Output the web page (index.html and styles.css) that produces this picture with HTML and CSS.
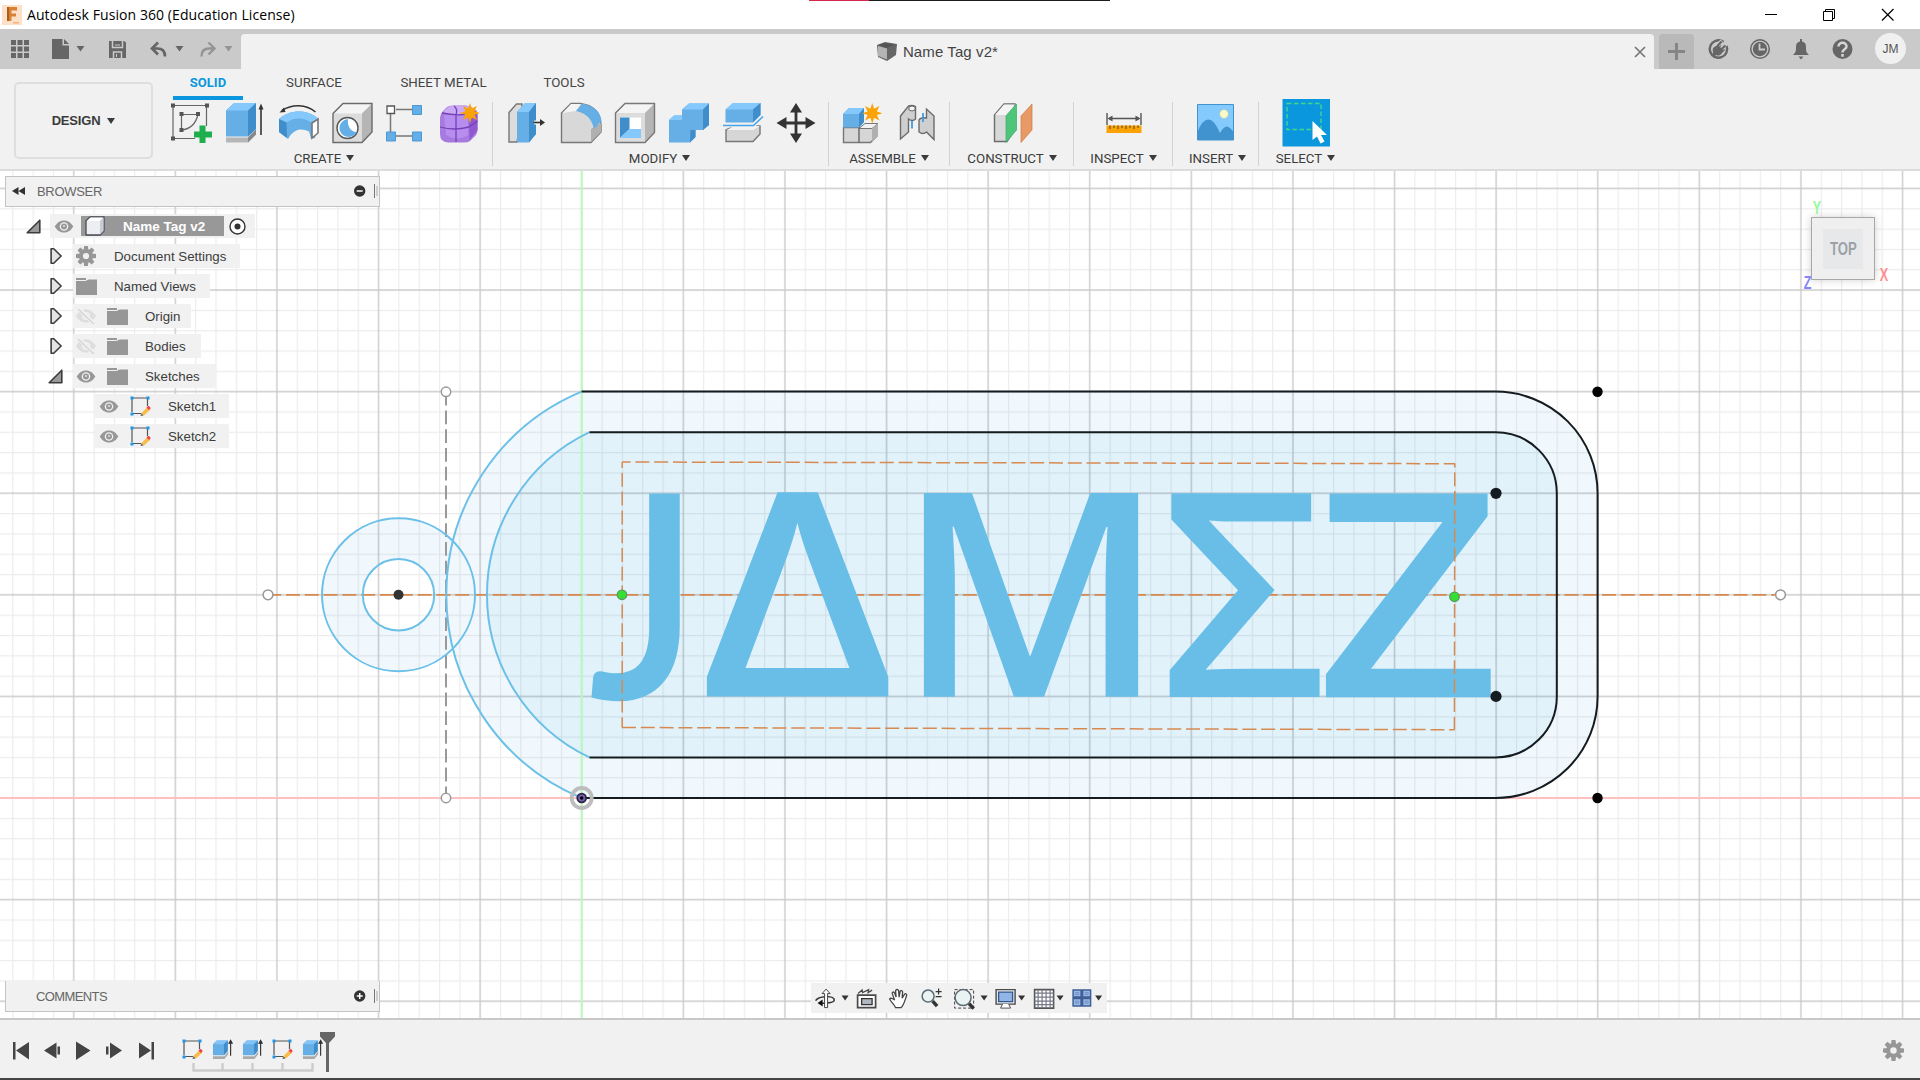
FILE: index.html
```html
<!DOCTYPE html>
<html lang="en">
<head>
<meta charset="utf-8">
<title>Autodesk Fusion 360 (Education License)</title>
<link rel="stylesheet" href="styles.css">
</head>
<body>
<svg class="defs" width="0" height="0" aria-hidden="true">
  <symbol id="eye" viewBox="0 0 20 14"><path d="M0 7C3 2 6.500 .5 10 .5S17 2 20 7C17 12 13.500 13.500 10 13.500S3 12 0 7Z" fill="#979797"/><circle cx="10" cy="7" r="4.600" fill="#f1f1f1"/><circle cx="10" cy="7" r="3.200" fill="#979797"/><circle cx="10" cy="6.500" r="1.100" fill="#e4e4e4"/></symbol>
  <symbol id="eyeoff" viewBox="0 0 20 16"><path d="M0 8C3 3 6.500 1.500 10 1.500S17 3 20 8C17 13 13.500 14.500 10 14.500S3 13 0 8Z" fill="#dedede"/><circle cx="10" cy="8" r="4" fill="#f1f1f1"/><circle cx="10" cy="8" r="2.400" fill="#dedede"/><path d="M2 0L18.500 16" stroke="#f1f1f1" stroke-width="4"/><path d="M2 1L18 16" stroke="#d6d6d6" stroke-width="1.500"/></symbol>
  <symbol id="folder" viewBox="0 0 21 17"><path d="M0 0h10v2H0ZM0 3h9.500l3-1.500H21V17H0Z" fill="#979797"/></symbol>
  <symbol id="gear" viewBox="-10 -10 20 20"><g fill="#979797"><path d="M-1.900 -10h3.800l.6 5h-5Z"/><path d="M-1.900 -10h3.800l.6 5h-5Z" transform="rotate(45)"/><path d="M-1.900 -10h3.800l.6 5h-5Z" transform="rotate(90)"/><path d="M-1.900 -10h3.800l.6 5h-5Z" transform="rotate(135)"/><path d="M-1.900 -10h3.800l.6 5h-5Z" transform="rotate(180)"/><path d="M-1.900 -10h3.800l.6 5h-5Z" transform="rotate(225)"/><path d="M-1.900 -10h3.800l.6 5h-5Z" transform="rotate(270)"/><path d="M-1.900 -10h3.800l.6 5h-5Z" transform="rotate(315)"/></g><circle r="5" fill="none" stroke="#979797" stroke-width="3.800"/></symbol>
  <symbol id="closed" viewBox="0 0 14 18"><path d="M1.200 1.200H4L12 9L4 16.800H1.200Z" fill="#e4e4e4" stroke="#3c3c3c" stroke-width="1.700" stroke-linejoin="round"/></symbol>
  <symbol id="open" viewBox="0 0 15 15"><path d="M13.800 1.200V13.800H1.200Z" fill="#999" stroke="#3c3c3c" stroke-width="1.600" stroke-linejoin="round"/></symbol>
  <symbol id="sketch" viewBox="0 0 21 21"><path d="M3 2H17M2 3V16M3 17.500H11M17.500 3V10" stroke="#555" stroke-width="1.200" fill="none"/><g fill="#1f96e6"><path d="M.5.5h3v3h-3ZM16.500.5h3v3h-3ZM.5 16.500h3v3h-3Z"/></g><path d="M11 19.500l1-3 5-5 3 2.500-5.500 5Z" fill="#fbbb48"/><path d="M10.500 20l.8-2.700 2.300 2.200Z" fill="#666"/><path d="M16.500 11.500l1.500-1.500q2.500 0 2.500 2.500l-1.500 1.500Z" fill="#f0404e"/></symbol>
  <symbol id="extr" viewBox="0 0 22 21"><path d="M1 17.500h12l4-5v3l-4 5H1Z" fill="#aaa"/><path d="M1 5L5 1h11.500V12L12.500 16.500H1Z" fill="#66aee6"/><path d="M1 5L5 1h11.500L12.500 5Z" fill="#82c4f6"/><path d="M12.500 5L16.500 1V12L12.500 16.500Z" fill="#3f8ecb"/><path d="M19.500 17V3M17.800 4l1.700-3 1.700 3Z" stroke="#333" stroke-width="1.200" fill="#333"/></symbol>
  <symbol id="dn" viewBox="0 0 8 6"><path d="M0 0h8L4 6Z" fill="currentColor"/></symbol>
  <symbol id="burst" viewBox="-10 -10 20 20"><path d="M0-10L1.800-4.500 7-7 4.500-1.800 10 0 4.500 1.800 7 7 1.800 4.500 0 10-1.800 4.500-7 7-4.500 1.800-10 0-4.500-1.800-7-7-1.800-4.500Z" fill="#fba205"/></symbol>
</svg>
<div class="app">
  <header class="titlebar">
    <svg class="logo" viewBox="0 0 20 20"><path d="M0 0H20V20H0Z" fill="#fce0c8"/><path d="M5 2H15V5.500H9.500V8.500H14V11.500H9.500V16H5Z" fill="#d98235"/><path d="M5 2h2v14H5Z" fill="#a85e20"/><path d="M11 17h6v1.500h-6Z" fill="#f5b27c"/></svg>
    <span class="apptitle">Autodesk Fusion 360 (Education License)</span>
    <span class="topline"></span>
    <svg class="winbtns" width="140" height="14" viewBox="0 0 140 14" fill="none" stroke="#000"><path d="M1 6.500h12"/><path d="M59.500 3.500h9v9h-9ZM61.500 3.500v-2h9v9h-2"/><path d="M118 1l11.500 11.500M129.500 1L118 12.500" stroke-width="1.200"/></svg>
  </header>

  <div class="tabbar">
    <svg class="quick" width="241" height="40" viewBox="0 29 241 40">
      <g fill="#666"><path d="M11 40h5v5h-5zM17.500 40h5v5h-5zM24 40h5v5h-5zM11 46.500h5v5h-5zM17.500 46.500h5v5h-5zM24 46.500h5v5h-5zM11 53h5v5h-5zM17.500 53h5v5h-5zM24 53h5v5h-5z"/>
      <path d="M52 39H62.500V45.500H69V59H52Z"/><path d="M64 39l5 5H64Z"/><path d="M76.500 46h8l-4 5.500Z"/>
      <path d="M109 41h15l2 1.500V58H109Z"/><path d="M175.500 46h8l-4 5.500Z"/></g>
      <path d="M112.500 41v6.500h10V41M113.500 58v-6h8v6" fill="none" stroke="#cacaca" stroke-width="1.500"/><path d="M115 45h5M116.500 54v3" stroke="#cacaca"/>
      <path d="M158 42.500l-6 6 6 6M152.500 48.500h5c5 0 7.500 2.500 7.500 8" fill="none" stroke="#666" stroke-width="2.700"/>
      <path d="M208.500 42.500l6 6-6 6M214 48.500h-5c-5 0-7.500 2.500-7.500 8" fill="none" stroke="#949494" stroke-width="2.400"/><path d="M224.500 46h8l-4 5.500Z" fill="#949494"/>
    </svg>
    <div class="doctab">
      <svg width="21" height="19" viewBox="0 0 21 19"><path d="M0 3L8 0l12 2-1 11-9 6-9-4Z" fill="#666"/><path d="M1 4l9 2.500V17.500L1 14Z" fill="#b4b4b4"/><path d="M1 3L8 1l10 1.500L10 6Z" fill="#555"/></svg>
      <span>Name Tag v2*</span>
      <svg class="x" width="12" height="12" viewBox="0 0 12 12"><path d="M1 1l10 10M11 1L1 11" stroke="#777" stroke-width="1.700"/></svg>
    </div>
    <div class="plus"><svg width="17" height="17" viewBox="0 0 17 17"><path d="M8.500 0V17M0 8.500H17" stroke="#858585" stroke-width="3"/></svg></div>
    <svg class="status" width="160" height="40" viewBox="1700 29 160 40">
      <circle cx="1718.500" cy="49" r="8.700" fill="none" stroke="#666" stroke-width="2.400" stroke-dasharray="22 5 28 0" transform="rotate(-200 1718.500 49)"/>
      <path d="M1713 57v-5c-1-3 0-5 3-6l4-2 5 6-3 3c-2 3-4 3-6 2l-3 3Z" fill="#666"/><path d="M1718 45l4-4M1721.500 48.500l4-4" stroke="#cacaca" stroke-width="4"/><path d="M1717.500 46l4-4.500M1721 49.500l4.500-4" stroke="#666" stroke-width="2.200"/>
      <circle cx="1760" cy="49" r="9.300" fill="none" stroke="#666" stroke-width="1.500"/><circle cx="1760" cy="49" r="7.200" fill="#666"/><path d="M1759.500 43.500V49.500h5.500" fill="none" stroke="#cacaca" stroke-width="1.800"/>
      <path d="M1793 55c3-3 3-4 3-8 0-3 1-5 4-5.500V39h2v2.500c3 .5 4 2.500 4 5.500 0 4 0 5 3 8Z" fill="#666"/><path d="M1798.500 56.500h5l-2.500 3Z" fill="#666"/>
      <circle cx="1842.500" cy="49" r="10" fill="#666"/><path d="M1838.500 46.500c0-5 8-5 8 0 0 3-4 2.500-4 6M1842.500 54v2.800" fill="none" stroke="#d6d6d6" stroke-width="2.500"/>
    </svg>
    <div class="avatar">JM</div>
  </div>

  <div class="ribbon">
    <button class="design">DESIGN <svg width="8" height="6"><use href="#dn"/></svg></button>
    <div class="tools">
      <nav class="tabs"><span class="tab on">SOLID</span><span class="tab t2">SURFACE</span><span class="tab t3">SHEET METAL</span><span class="tab t4">TOOLS</span></nav>
      <div class="groups">
        <section class="group g1"><div class="icons">
          <svg viewBox="0 0 54 46"><g fill="none" stroke="#666" stroke-width="1.200"><path d="M9 4.500V37.500H31M9 4.500H42.500V25"/><path d="M17.500 13.500H34M17.500 13.500V29C27 28 32 22 34 13.500"/></g><path d="M7 2.500h4v4H7zM41 2.500h4v4h-4zM7 35.500h4v4H7zM15.500 11h4v4h-4zM32 11h4v4h-4zM15.500 27h4v4h-4z" fill="#555"/><path d="M35.500 24.500h6v6H48v6h-6.500V42h-6v-5.500H30v-6h5.500Z" fill="#1fae4d"/></svg>
          <svg viewBox="0 0 54 46"><path d="M8 36.500h22l8-8v5l-8 8H8Z" fill="#b6b6b6"/><path d="M30 36.500l8-8v5l-8 8Z" fill="#888"/><path d="M8 9.500L16 2H38V28L30 35.500H8Z" fill="#66aee6"/><path d="M8 9.500L16 2H38L30 9.500Z" fill="#85c8fb"/><path d="M30 9.500L38 2V28L30 35.500Z" fill="#3f8ecb"/><path d="M43 34V7" stroke="#333" stroke-width="1.600"/><path d="M40.500 8.500L43 2.500l2.500 6Z" fill="#333"/></svg>
          <svg viewBox="0 0 54 46"><path d="M7 18C17 8 37 8 46.500 18L43 37l-4 .5-2-7C30 27 22 27 16 38L7 31Z" fill="#66aee6"/><path d="M7 18C17 8 37 8 46.500 18L39 21.500C32 16 22 16 14.500 21.500Z" fill="#85c8fb"/><path d="M7 18l7.500 3.500L15 37l-8-6Z" fill="#3f8ecb"/><path d="M40 22l6-4v14l-6 5Z" fill="#fff" stroke="#777" stroke-width="1.600"/><path d="M10 9.500C20 3 34 3 43.500 11" fill="none" stroke="#333" stroke-width="1.500"/><path d="M7.500 11.500l4.500-5 1.500 4.500Z" fill="#333"/></svg>
          <svg viewBox="0 0 54 46"><path d="M7 12.500L17 2.500H46V31L36 41.500H7Z" fill="#dcdcdc"/><path d="M8 12.500l9-9.500H46L36 12.500Z" fill="#f4f4f4"/><path d="M36 12.500L46 2.500V31L36 41.500Z" fill="#b5b5b5"/><path d="M7 12.500L17 2.500H46V31L36 41.500H7Z" fill="none" stroke="#6b6b6b" stroke-width="1.400"/><circle cx="21.500" cy="27" r="10.500" fill="#fff" stroke="#555" stroke-width="1.400"/><path d="M22 18a9 9 0 1 0 8.500 13C25 31 21 25 22 18Z" fill="#66aee6"/></svg>
          <svg viewBox="0 0 54 46"><path d="M16 8.500H32M10.500 13V31M16 35H32" stroke="#777" stroke-width="1.500"/><path d="M7 5h7.500v7.500H7Z" fill="#fff" stroke="#555" stroke-width="1.300"/><path d="M32.500 4.500h9v9h-9zM6.500 31h9v9h-9zM32.500 31h9v9h-9z" fill="#66aee6" stroke="#4a97d6"/></svg>
          <svg viewBox="0 0 54 46"><path d="M6 17Q6 13 9 10L13 6Q15 4.500 19 4.500H32Q43 6 43.500 15V29Q43.500 33 40 36L36 40Q34 41.500 30 41.500H14Q6 41 6 33Z" fill="#a77ae0"/><path d="M9 11Q14 4.500 20 4.500H31Q38 5 40 9L33 13H13Z" fill="#cbaaf5"/><path d="M35 15l7-6q2 3 1.500 8V29l-8 10Z" fill="#9059cf"/><path d="M10 14q10-2 24 0v20q-10 7-22 0Z" fill="#b78df0"/><path d="M6 26q14 4 29 0l8.500-6M20 5q4 3 2 9v27M8 12q15 3 25 1" fill="none" stroke="#7441b6" stroke-width="1.300"/><use href="#burst" x="26" y="2" width="20" height="20"/></svg>
        </div><div class="label">CREATE <svg width="8" height="6"><use href="#dn"/></svg></div></section>
        <section class="group g2"><div class="icons">
          <svg viewBox="0 0 54 46"><path d="M9 11.500L16.500 3H22V10l-5 31H9Z" fill="#dcdcdc" stroke="#777" stroke-width="1.400"/><path d="M17 11L25 2H36V33L29 41.500H17Z" fill="#66aee6"/><path d="M17 11L25 2H36L29 11Z" fill="#85c8fb"/><path d="M29 11L36 2V33L29 41.500Z" fill="#3f8ecb"/><path d="M34 21.500H41" stroke="#f1f1f1" stroke-width="4"/><path d="M33.500 21.500H42" stroke="#333" stroke-width="1.600"/><path d="M40 18l5 3.500-5 3.500Z" fill="#333"/></svg>
          <svg viewBox="0 0 54 46"><path d="M7.500 12L17 2.500H26Q46 5 47 24V31L37 41.500H7.500Z" fill="#d8d8d8" stroke="#777" stroke-width="1.400"/><path d="M8.500 12L17 3H27L22 10Z" fill="#f4f4f4"/><path d="M37 28l10-6v9l-10 10Z" fill="#b0b0b0"/><path d="M22 10l6-7.500Q46 6 47.500 20L40 28Q37 13 22 10Z" fill="#66aee6"/></svg>
          <svg viewBox="0 0 54 46"><path d="M7.500 12L17 2.500H46.500V31.500L37 41.500H7.500Z" fill="#dcdcdc"/><path d="M8.500 12l8.500-9H46L37 12Z" fill="#f4f4f4"/><path d="M37 12l9.500-9.500v29L37 41.500Z" fill="#b5b5b5"/><path d="M7.500 12L17 2.500H46.500V31.500L37 41.500H7.500Z" fill="none" stroke="#777" stroke-width="1.400"/><path d="M12 16.500H33V37H12Z" fill="#fff"/><path d="M12 16.500H21.500V28L12 37Z" fill="#3f8ecb"/><path d="M21.500 28H33v9H12Z" fill="#85c8fb"/></svg>
          <svg viewBox="0 0 54 46"><path d="M7 19L12 14.500H20V8.500L27 2.500H47V24L41 29H33.500V36L28 41.500H7Z" fill="#66aee6"/><path d="M7 19l5-4.500h8V19ZM20 8.500l7-6H47L41 8.500Z" fill="#85c8fb"/><path d="M41 8.500l6-6V24L41 29ZM28.500 29h5v7L28 41.500Z" fill="#3f8ecb"/></svg>
          <svg viewBox="0 0 54 46"><path d="M10 29l8-4H44V33L37 40.500H10Z" fill="#d6d6d6" stroke="#777" stroke-width="1.400"/><path d="M10.500 29l8-4H44l-7 4Z" fill="#f2f2f2"/><path d="M9.500 8.500L17 2H44.500V14L37 21.500H9.500Z" fill="#66aee6"/><path d="M9.500 8.500L17 2H44.500L37 8.500Z" fill="#85c8fb"/><path d="M37 8.500L44.500 2V14L37 21.500Z" fill="#3f8ecb"/><path d="M7 24.500H37.500L47 15.500" fill="none" stroke="#f1f1f1" stroke-width="4"/><path d="M7 24.500H37.500L47 15.500" fill="none" stroke="#45a5ea" stroke-width="1.600"/></svg>
          <svg viewBox="0 0 54 46"><path d="M26 8V37M11 22H41" stroke="#333" stroke-width="2.800"/><path d="M26 2l6 9.500H20ZM26 42l6-9.500H20ZM6.500 22l10-6v12ZM45.500 22l-10-6v12Z" fill="#333"/></svg>
        </div><div class="label">MODIFY <svg width="8" height="6"><use href="#dn"/></svg></div></section>
        <section class="group g3"><div class="icons">
          <svg viewBox="0 0 54 46"><path d="M8.500 26.500H42V35L35.500 41.500H8.500Z" fill="#d6d6d6" stroke="#777" stroke-width="1.400"/><path d="M25 26.500l5-4H43l-6 5H24Z" fill="#f2f2f2" stroke="#777"/><path d="M37 27l6-4.500V35L37 41.500Z" fill="#b0b0b0"/><path d="M24 26v15.500" stroke="#666" stroke-width="1.400"/><path d="M8 13L14 7H29V21L24 26.500H8Z" fill="#66aee6"/><path d="M8 13l6-6H29l-5 6Z" fill="#85c8fb"/><path d="M24 13l5-6V21L24 26.500Z" fill="#3f8ecb"/><use href="#burst" x="27" y="2" width="20.500" height="20.500"/></svg>
          <svg viewBox="0 0 54 46"><path d="M11.500 15l8-10q4-1.500 7 .5V18q-3 3-7 0v13l-8 7Z" fill="#cfcfcf" stroke="#6b6b6b" stroke-width="1.400"/><path d="M20 6q3-2 6 0v3q-3 2-6 0Z" fill="#f4f4f4" stroke="#6b6b6b"/><path d="M45 15l-7.500-7V17q-6-1-7.500 2V31q4 3 7.500 0l7.500 7.500Z" fill="#cfcfcf" stroke="#6b6b6b" stroke-width="1.400"/><path d="M23 20v7.500M34 12v9" stroke="#3c9ce4" stroke-width="1.800"/></svg>
        </div><div class="label">ASSEMBLE <svg width="8" height="6"><use href="#dn"/></svg></div></section>
        <section class="group g4"><div class="icons">
          <svg viewBox="0 0 54 46"><path d="M9.500 14L19 3H30V28L22 40.500H9.500Z" fill="#d8d8d8" stroke="#6b6b6b" stroke-width="1.400"/><path d="M10 14l9-10.500H30L21 14Z" fill="#f4f4f4"/><path d="M21 15L31.500 3V29L21 41.500Z" fill="#4fc57a" stroke="#3aae65" stroke-width=".7"/><path d="M36 15L47 3V29L36 41.500Z" fill="#e79a66" stroke="#cf7a42" stroke-width=".7"/></svg>
        </div><div class="label">CONSTRUCT <svg width="8" height="6"><use href="#dn"/></svg></div></section>
        <section class="group g5"><div class="icons">
          <svg viewBox="0 0 54 46"><path d="M10 12v12M44 12v12M12 17.500H42" stroke="#555" stroke-width="1.400"/><path d="M10.500 17.500l5-3v6ZM43.500 17.500l-5-3v6Z" fill="#555"/><path d="M9.500 24.500h35V32h-35Z" fill="#fba205"/><path d="M13 24.500v3.500M17 24.500v2.500M21 24.500v3.500M25 24.500v2.500M29 24.500v3.500M33 24.500v2.500M37 24.500v3.500M41 24.500v2.500" stroke="#6f5412" stroke-width="1.200"/></svg>
        </div><div class="label">INSPECT <svg width="8" height="6"><use href="#dn"/></svg></div></section>
        <section class="group g6"><div class="icons">
          <svg viewBox="0 0 54 46"><path d="M9.500 3.500h36v35.500h-36Z" fill="#85cafc"/><path d="M9.500 31Q14 19 20 18.500T32 32Q36 25 39 25.500T45.500 31V39h-36Z" fill="#4093cf"/><path d="M9.500 3.500h36v35.500h-36Z" fill="none" stroke="#4093cf"/><circle cx="36" cy="13" r="4.200" fill="#fcf8c8" stroke="#cfd9a5" stroke-width=".6"/></svg>
        </div><div class="label">INSERT <svg width="8" height="6"><use href="#dn"/></svg></div></section>
        <section class="group g7"><div class="icons">
          <svg viewBox="0 0 54 46"><path d="M3.500-2h47.500V45.500H3.500Z" fill="#0a97dd"/><path d="M8 2.500H42V28.500H8Z" fill="none" stroke="#43d68c" stroke-width="1.400" stroke-dasharray="4.500 2.500"/><path d="M33.500 20V39l4.500-3.500 3.500 7 4-2-3.500-6.500h6Z" fill="#fff"/></svg>
        </div><div class="label">SELECT <svg width="8" height="6"><use href="#dn"/></svg></div></section>
      </div>
    </div>
  </div>

  <main class="canvas">
    <svg class="drawing" width="1920" height="847" viewBox="0 171 1920 847">
      <defs>
        <pattern id="minor" patternUnits="userSpaceOnUse" x="581.200" y="797.500" width="20.320" height="20.320"><path d="M.5 0V20.320M0 .5H20.320" stroke="#000" stroke-opacity=".075" stroke-width="1.300"/></pattern>
        <pattern id="major" patternUnits="userSpaceOnUse" x="580.700" y="797" width="101.600" height="101.600"><path d="M1 0V101.600M0 1H101.600" stroke="#000" stroke-opacity=".145" stroke-width="1.400"/></pattern>
      </defs>
      <rect y="171" width="1920" height="847" fill="#fff"/>
      <path d="M398.500 518.300a76.500 76.500 0 0 1 0 153a76.500 76.500 0 0 1 0-153Zm0 40.800a35.700 35.700 0 0 0 0 71.400a35.700 35.700 0 0 0 0-71.400Z" fill="#f0f8fd"/>
      <path d="M581.500 391.600H1495.600A102 101.700 0 0 1 1597.600 493.300V696.400A102 101.700 0 0 1 1495.600 798H581.500A220.300 220.300 0 0 1 581.500 391.600Z" fill="#f0f8fd"/>
      <path d="M589.500 432.200H1495.600A61.200 61.200 0 0 1 1556.800 493.300V696.400A61.200 61 0 0 1 1495.600 757.400H589.500A180.200 180.200 0 0 1 589.500 432.200Z" fill="#e1f2fb"/>
      <rect y="171" width="1920" height="847" fill="url(#minor)"/>
      <rect y="171" width="1920" height="847" fill="url(#major)"/>
      <path d="M0 798H1920" stroke="#ffc0c0" stroke-width="2"/>
      <path d="M581.700 171V1018" stroke="#b9fcbc" stroke-width="2"/>
      <path d="M446 391.600V798" stroke="#999" stroke-width="2" stroke-dasharray="13.800 5"/>
      <path d="M267.200 594.800H1780" stroke="#d68a50" stroke-width="1.800" stroke-dasharray="14 4.800"/>
      <g class="nametag">
        <text class="lato" transform="translate(588.500 699) scale(.92 1)">J</text>
        <text transform="translate(699.600 696.500) scale(1.110 1)">Δ</text>
        <text transform="translate(896.500 696.800) scale(1.023 1)">M</text>
        <text transform="translate(1159 697) scale(1.020 1)">Σ</text>
        <text transform="translate(1316 697.300) scale(1.124 1)">Z</text>
      </g>
      <g fill="none" stroke="#d68a50" stroke-width="1.500" stroke-dasharray="14 4.800">
        <path d="M622 462L1455 463.700" stroke-dashoffset="5.400"/><path d="M622.200 462V727.500" stroke-dashoffset="8"/><path d="M622 727.500L1454.500 729.700"/><path d="M1454.800 463.500L1454.400 729.700" stroke-dashoffset="10"/>
      </g>
      <g fill="none" stroke="#6cc0e8" stroke-width="2">
        <circle cx="398.500" cy="594.800" r="76.500"/><circle cx="398.500" cy="594.800" r="35.700"/>
        <path d="M581.500 391.600A220.300 220.300 0 0 0 581.500 798M589.500 432.200A180.200 180.200 0 0 0 589.500 757.400"/>
      </g>
      <g fill="none" stroke="#151c20" stroke-width="2">
        <path d="M581.500 391.600H1495.600A102 101.700 0 0 1 1597.600 493.300V696.400A102 101.700 0 0 1 1495.600 798H581.500"/>
        <path d="M589.500 432.200H1495.600A61.200 61.200 0 0 1 1556.800 493.300V696.400A61.200 61 0 0 1 1495.600 757.400H589.500"/>
      </g>
      <g fill="#fff" stroke="#999" stroke-width="1.500"><circle cx="446" cy="391.800" r="4.700"/><circle cx="446" cy="798" r="4.700"/><circle cx="268" cy="594.800" r="4.900"/><circle cx="1780.500" cy="594.800" r="4.900"/></g>
      <circle cx="1597.500" cy="391.700" r="5.200"/><circle cx="1597.500" cy="798" r="5.200"/>
      <g fill="#141c22"><circle cx="1496" cy="493.300" r="5.600"/><circle cx="1496" cy="696.400" r="5.600"/></g>
      <circle cx="398.500" cy="594.800" r="5" fill="#333"/>
      <g fill="#35e035" stroke="#5b9a5b" stroke-width="1.400"><circle cx="622" cy="594.800" r="4.700"/><circle cx="1454.500" cy="596.800" r="4.700"/></g>
      <circle cx="581.700" cy="798" r="10" fill="none" stroke="#bdbdbd" stroke-width="3.800"/><circle cx="581.700" cy="798" r="4.400" fill="#7a5fb4" stroke="#2c2740" stroke-width="1.800"/><circle cx="581.700" cy="798" r="1.700"/>
    </svg>

    <div class="viewcube">
      <div class="face"><div class="core"><span>TOP</span></div></div>
      <span class="ax ay">Y</span><span class="ax ax-x">X</span><span class="ax az">Z</span>
    </div>

    <aside class="browser">
      <div class="panelhead"><svg width="13" height="8" viewBox="0 0 13 8"><path d="M6.500 0V8L0 4ZM13 0V8L6.500 4Z" fill="#333"/></svg><span>BROWSER</span><svg class="pm" width="24" height="14" viewBox="0 0 24 14"><circle cx="5.700" cy="7" r="5.700" fill="#333"/><path d="M2.700 7h6" stroke="#fff" stroke-width="1.500"/><path d="M20.500 0V14" stroke="#777"/><path d="M23 2V12" stroke="#aaa"/></svg></div>
      <div class="tree">
        <div class="row r1"><svg class="arr" width="15" height="15"><use href="#open"/></svg><div class="lab l1"><svg width="20" height="13"><use href="#eye"/></svg><span class="sel"><svg width="20" height="20" viewBox="0 0 20 20"><path d="M1 5L5 1H19V15L15 19H1Z" fill="#eceef2" stroke="#4a4d55" stroke-width="1.300" stroke-linejoin="round"/><path d="M2 5l3.500-3.500H18L14.500 5Z" fill="#fff"/><path d="M15 5l3.500-3.500V15L15 18.500Z" fill="#c9ccd4"/></svg>Name Tag v2</span><svg width="17" height="17" viewBox="0 0 17 17"><circle cx="8.500" cy="8.500" r="7.500" fill="#fff" stroke="#333" stroke-width="1.400"/><circle cx="8.500" cy="8.500" r="3" fill="#333"/></svg></div></div>
        <div class="row r2"><svg class="arr" width="13" height="18"><use href="#closed"/></svg><div class="lab w167"><svg width="20" height="20"><use href="#gear"/></svg><span class="far">Document Settings</span></div></div>
        <div class="row r2"><svg class="arr" width="13" height="18"><use href="#closed"/></svg><div class="lab w137"><svg width="21" height="17"><use href="#folder"/></svg><span class="far b">Named Views</span></div></div>
        <div class="row r2"><svg class="arr" width="13" height="18"><use href="#closed"/></svg><div class="lab w118"><svg width="20" height="16"><use href="#eyeoff"/></svg><svg class="second" width="21" height="17"><use href="#folder"/></svg><span class="far b">Origin</span></div></div>
        <div class="row r2"><svg class="arr" width="13" height="18"><use href="#closed"/></svg><div class="lab w128"><svg width="20" height="16"><use href="#eyeoff"/></svg><svg class="second" width="21" height="17"><use href="#folder"/></svg><span class="far b">Bodies</span></div></div>
        <div class="row r6"><svg class="arr" width="15" height="15"><use href="#open"/></svg><div class="lab w143"><svg width="20" height="13"><use href="#eye"/></svg><svg class="second" width="21" height="17"><use href="#folder"/></svg><span class="far b">Sketches</span></div></div>
        <div class="row r7"><div class="lab w134"><svg width="20" height="13"><use href="#eye"/></svg><svg class="second" width="21" height="21"><use href="#sketch"/></svg><span class="far b">Sketch1</span></div></div>
        <div class="row r7"><div class="lab w134"><svg width="20" height="13"><use href="#eye"/></svg><svg class="second" width="21" height="21"><use href="#sketch"/></svg><span class="far b">Sketch2</span></div></div>
      </div>
    </aside>

    <div class="comments"><span>COMMENTS</span><svg class="pm" width="24" height="14" viewBox="0 0 24 14"><circle cx="5.700" cy="7" r="5.700" fill="#333"/><path d="M2.700 7h6M5.700 4v6" stroke="#fff" stroke-width="1.500"/><path d="M20.500 0V14" stroke="#777"/><path d="M23 2V12" stroke="#aaa"/></svg></div>

    <div class="navbar">
      <svg width="296" height="30" viewBox="810.400 982.400 296 30">
        <g fill="#333"><path d="M841 995h7l-3.500 5ZM980 995h7l-3.500 5ZM1017.500 995h7l-3.500 5ZM1056 995h7l-3.500 5ZM1094.500 995h7l-3.500 5Z"/></g>
        <path d="M815 1000c3-5 17-5 18.500-1.500s-6 4.500-15 4" fill="none" stroke="#333" stroke-width="1.500"/><path d="M817 1002.500l5-3.500v7Z" fill="#111"/><path d="M824 1007V993h-2.500l4-4.500 4 4.500H827v14Z" fill="#fff" stroke="#444"/>
        <path d="M857 994.500h18V1007H857Z" fill="#fff" stroke="#4a4a4a" stroke-width="1.700"/><path d="M861 998h10.500v6H861Z" fill="#b0b7c2" stroke="#333" stroke-width="1.300"/><path d="M857.500 993l4-3.500.5 2.500 6-3-.5 3 4-2.500" fill="none" stroke="#4a4a4a" stroke-width="1.300"/>
        <path d="M895 1007c-1-3-5-6-6-8.500 1-1.500 3-1 5 1l-2.500-7c.5-1.500 2-1.500 2.500 0l1.500 4-.5-6.500c.5-1.500 2.500-1.500 3 0l.5 6.500 1-5.500c.5-1.500 2.500-1 2.500.5l-.5 6 2.500-4c1-1 2.500 0 2 1.500-1.500 4-2.500 9-5.500 12Z" fill="#fff" stroke="#444" stroke-width="1.300"/>
        <circle cx="927.500" cy="995.500" r="6" fill="#e9f4f2" stroke="#5c6a74" stroke-width="1.500"/><path d="M932 1000.500l4.500 5" stroke="#333" stroke-width="3.500"/><path d="M935 991h6M938 988v6M935 996h6" stroke="#333" stroke-width="1.200"/>
        <path d="M954 989h19v18.500h-19Z" fill="none" stroke="#444" stroke-dasharray="3 2"/><circle cx="962.500" cy="997" r="8" fill="#e9f4f2" stroke="#5c6a74" stroke-width="1.500"/><path d="M968.500 1003l4.500 5" stroke="#333" stroke-width="3.500"/>
        <path d="M995.500 989h19v14.500h-19Z" fill="#e9edf3" stroke="#4a4a4a" stroke-width="1.400"/><path d="M998 991.500h14v9.500H998Z" fill="#8fb6e6" stroke="#36558f" stroke-width="1.300"/><path d="M1002 1003.500l-2 4h10l-2-4" fill="#fff" stroke="#555"/>
        <path d="M1034 989h19v18.500h-19Z" fill="#fff" stroke="#555" stroke-width="1.600"/><path d="M1037.500 989v18.500M1041.500 989v18.500M1045.500 989v18.500M1049.500 989v18.500M1034 992.500h19M1034 996.500h19M1034 1000.500h19M1034 1004h19" stroke="#777a88" stroke-width="1.200"/>
        <path d="M1072.500 989.500h8v7h-8zM1082 989.500h8v7h-8zM1072.500 998h8v7.500h-8zM1082 998h8v7.500h-8z" fill="#9ab8e4" stroke="#3f5f96" stroke-width="1.500"/><path d="M1075 992h3v2h-3zM1084.500 992h3v2h-3zM1075 1000.500h3v2h-3zM1084.500 1000.500h3v2h-3z" fill="none" stroke="#6f92c8"/>
      </svg>
    </div>
  </main>

  <footer class="timeline">
    <svg class="play" width="160" height="20" viewBox="0 1041 160 20" fill="#444"><path d="M13 1042h2.500v17.500H13ZM29 1042v17.500L16 1050.500ZM44 1050.500l12.500-8v16ZM57.500 1046.500h2.500v8h-2.500ZM76 1041.500l14.500 9-14.500 9.500ZM106 1046.500h2.500v8H106ZM110 1042.500l12 8-12 8ZM139 1042.500l12 8-12 8ZM151.500 1042h2.500v17.500h-2.500Z"/></svg>
    <div class="feats">
      <svg width="21" height="21"><use href="#sketch"/></svg><svg width="21" height="21"><use href="#extr"/></svg><svg width="21" height="21"><use href="#extr"/></svg><svg width="21" height="21"><use href="#sketch"/></svg><svg width="21" height="21"><use href="#extr"/></svg>
      <svg class="bracket" width="150" height="42" viewBox="190 1031 150 42"><path d="M193.500 1063v7.500h119V1063M222.500 1063v7M252.500 1063v7M282.500 1063v7" fill="none" stroke="#cbcbcb" stroke-width="2.300"/><path d="M320 1032h15v4.500l-6 6.500V1072h-3V1043l-6-6.500Z" fill="#666"/></svg>
    </div>
    <svg class="cog" width="21" height="21"><use href="#gear"/></svg>
  </footer>
</div>
</body>
</html>
```
FILE: styles.css
```css
* { box-sizing: border-box; }
body { margin: 0; font-family: "Liberation Sans", Arial, sans-serif; font-size: 13px; color: #3c3c3c; overflow: hidden; }
svg { display: block; flex: none; overflow: visible; }
.defs { position: absolute; }
.app { display: flex; flex-direction: column; width: 1920px; height: 1080px; background: #f1f1f1; }

.titlebar { position: relative; display: flex; align-items: center; height: 29px; padding: 0 20px 0 2px; background: #fff; color: #000; }
.logo { width: 20px; height: 20px; }
.apptitle { margin-left: 5px; font: 14px "Open Sans", sans-serif; letter-spacing: .08px; white-space: nowrap; }
.topline { position: absolute; left: 809px; top: 0; width: 301px; height: 1px; background: linear-gradient(90deg, #d4284e 60px, #1c1c1c 60px); }
.winbtns { margin-left: auto; margin-right: -4px; }

.tabbar { display: flex; align-items: flex-end; height: 40px; background: #cacaca; }
.doctab { position: relative; display: flex; align-items: center; justify-content: center; gap: 5px; width: 1413px; height: 35px; padding-right: 20px; background: #f1f1f1; border-radius: 4px 4px 0 0; font-size: 15px; letter-spacing: .1px; color: #444; }
.doctab .x { position: absolute; right: 8px; top: 12px; }
.plus { display: flex; align-items: center; justify-content: center; width: 35px; height: 35px; margin: 0 6px 0 5px; background: #b9b9b9; border-radius: 4px 4px 0 0; }
.avatar { width: 31px; height: 31px; margin: 0 0 5px 15px; border-radius: 50%; background: #f0f0f0; font: 12px/32px "Liberation Sans", sans-serif; text-align: center; color: #555; }

.ribbon { display: flex; height: 102px; border-bottom: 2px solid #dcdcdc; }
.design { display: flex; align-items: center; justify-content: center; gap: 7px; width: 139px; height: 77px; margin: 13px 0 0 14px; padding: 0; border: 2px solid #dedede; border-radius: 5px; background: #f1f1f1; font: bold 13px "Liberation Sans", sans-serif; letter-spacing: -.2px; color: #3c3c3c; }
.tools { display: flex; flex-direction: column; }
.tabs { display: flex; gap: 36px; height: 31px; margin-left: 20px; font: 13.300px Roboto, sans-serif; color: #444; }
.tab { height: 31px; line-height: 28px; text-align: center; white-space: nowrap; }
.tab.on { width: 70px; border-bottom: 4px solid #0a97dd; font-weight: bold; font-size: 13px; color: #0a97dd; }
.t2 { width: 70px; }
.t3 { width: 117px; }
.t4 { width: 52px; }
.groups { display: flex; padding-top: 1px; }
.group { position: relative; display: flex; flex-direction: column; height: 67px; }
.group::after { content: ""; position: absolute; right: 0; top: 1px; width: 1px; height: 64px; background: #d2d2d2; }
.group:last-child::after { display: none; }
.icons { display: flex; justify-content: flex-start; height: 46px; }
.icons svg { width: 54px; height: 46px; }
.label { display: flex; align-items: center; justify-content: center; gap: 5px; height: 24px; margin-top: 1px; font: 13.300px Roboto, sans-serif; color: #3c3c3c; }
.g1 { width: 340px; padding-left: 11px; }
.g1 .label { padding-right: 9px; }
.g2 { width: 336px; padding-left: 7px; }
.g2 .label { padding-right: 10px; }
.g3 { width: 121px; padding-left: 6px; }
.g3 .label { padding-right: 7px; }
.g4 { width: 124px; padding-left: 35px; }
.g4 .label { margin-left: -35px; }
.g5 { width: 99px; padding-left: 23px; }
.g5 .label { margin-left: -23px; }
.g6 { width: 86px; padding-left: 15px; }
.g6 .label { margin-left: -12px; }
.g7 { width: 100px; padding-left: 20px; }
.g7 .label { margin-left: -20px; padding-right: 7px; }

.canvas { position: relative; height: 847px; overflow: hidden; }
.drawing { position: absolute; left: 0; top: 0; }
.nametag { fill: #69bee7; font: 600 285.500px "Open Sans", sans-serif; }
.nametag .lato { font-family: Lato, sans-serif; }

.viewcube { position: absolute; left: 1811px; top: 46px; width: 64px; height: 64px; }
.face { display: flex; align-items: center; justify-content: center; width: 64px; height: 63px; background: #efefef; border: 1px solid #a5a5a5; box-shadow: 0 0 8px rgba(0, 0, 0, .18); opacity: .96; }
.core { display: flex; align-items: center; justify-content: center; width: 40px; height: 40px; background: #e6e8ea; font: bold 19px "Liberation Sans", sans-serif; color: #999ea4; }
.core span { transform: scaleX(.69); }
.ax { position: absolute; font: bold 18px/16px "Liberation Sans", sans-serif; transform: scaleX(.7); }
.ay { left: 0; top: -17px; color: #98f89b; }
.ax-x { left: 67px; top: 50px; color: #ff8f8f; }
.az { left: -9px; top: 58px; color: #8585f8; }

.browser { position: absolute; left: 5px; top: 5px; width: 375px; }
.panelhead { display: flex; align-items: center; gap: 12px; height: 31px; padding: 0 1px 1px 6px; background: #f1f1f1; border: 1px solid #c3c3c3; letter-spacing: -.3px; color: #666; }
.pm { margin-left: auto; }
.tree { display: flex; flex-direction: column; gap: 6px; margin-top: 7px; font-size: 13.300px; }
.row { display: flex; align-items: center; height: 24px; }
.r1 { padding-left: 21px; }
.r1 .arr { margin-right: 9px; }
.r2 { padding-left: 45px; }
.r6 { padding-left: 43px; }
.r7 { padding-left: 90px; }
.arr { margin-right: 10px; }
.lab { display: flex; align-items: center; height: 24px; padding-left: 3px; background: #f1f1f1; white-space: nowrap; }
.l1 { width: 205px; padding-left: 4px; }
.sel { display: flex; align-items: center; gap: 18px; width: 143px; height: 20px; margin: 0 5px 0 7px; padding-left: 4px; background: #989898; font-weight: bold; font-size: 13.500px; color: #fff; }
.w167 { width: 167px; }
.w137 { width: 137px; }
.w118 { width: 118px; }
.w128 { width: 128px; }
.w143 { width: 143px; }
.w134 { width: 134px; padding-left: 4px; }
.far { margin-left: 18px; }
.far.b { margin-left: 17px; }
.second { margin-left: 11px; }

.comments { position: absolute; left: 5px; top: 810px; display: flex; align-items: center; width: 375px; height: 31px; padding: 0 1px 0 30px; background: #f1f1f1; border: solid #c3c3c3; border-width: 0 1px 1px; letter-spacing: -.6px; color: #666; }
.navbar { position: absolute; left: 811px; top: 812px; width: 296px; height: 30px; background: #f1f1f1; }

.timeline { display: flex; align-items: center; height: 62px; border-top: 2px solid #c8c8c8; border-bottom: 2px solid #444; padding-right: 16px; background: #f1f1f1; }
.play { margin-top: 3px; }
.feats { position: relative; display: flex; gap: 9px; margin: 1px 0 0 22px; }
.bracket { position: absolute; left: 8px; top: -8px; }
.cog { margin: 3px 0 0 auto; }
```
